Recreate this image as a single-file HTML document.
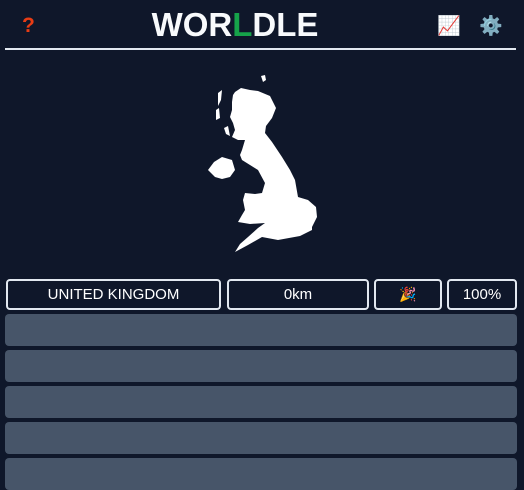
<!DOCTYPE html>
<html><head><meta charset="utf-8"><style>
*{box-sizing:border-box;margin:0;padding:0}
body{width:524px;height:490px;background:#0f172a;font-family:"Liberation Sans","DejaVu Sans",sans-serif;overflow:hidden;position:relative;color:#fff}
.hdr{position:absolute;left:5px;top:0;width:511px;height:50px;border-bottom:2px solid #e2e8f0}
.title{position:absolute;left:143px;width:174px;top:6px;text-align:center;font-weight:bold;font-size:33px;letter-spacing:0px;color:#f8fafc;white-space:nowrap}
.title span{color:#16a34a}
.q{position:absolute;left:17px;top:14px;font-size:21px;color:#e83c14;font-weight:bold}
.ic{position:absolute;top:14px;font-size:19px}
.box{position:absolute;top:279px;height:31px;border:2px solid #e2e8f0;border-radius:4px;text-align:center;line-height:27px;font-size:15px}
.row{position:absolute;left:5px;width:512px;height:32px;background:#475569;border-radius:4px}
</style></head><body>
<div class="hdr">
<div class="q">?</div>
<div class="title">WOR<span>L</span>DLE</div>
<div class="ic" style="left:432px">📈</div>
<div class="ic" style="left:474px;color:#ccc">⚙️</div>
</div>
<svg style="position:absolute;left:0;top:0" width="524" height="270">
<path fill="#fff" d="M235,92 L241,88 L250,90 L258,91 L270,96 L276,108 L272,118 L266,126 L265,133 L272,142 L282,157 L290,170 L295,180 L298,197 L308,200 L316,207 L317,217 L312,227 L312,230 L300,236 L278,240 L262,237 L248,245 L235,252 L240,244 L248,237 L258,228 L265,223 L250,224 L238,222 L242,215 L245,210 L243,200 L245,193 L255,194 L262,193 L265,183 L258,170 L250,165 L242,160 L240,155 L242,150 L245,140 L238,140 L232,137 L235,130 L233,123 L230,117 L232,110 L232,102 L233,95 Z"/>
<path fill="#fff" d="M208,170 L214,162 L222,157 L232,160 L235,170 L230,177 L222,179 L215,177 Z"/>
<path fill="#fff" d="M261,76 L265,75 L266,80 L263,82 Z M218,93 L222,90 L221,100 L218,106 Z M216,110 L219,108 L220,118 L216,120 Z M224,128 L228,126 L230,136 L226,134 Z"/>
</svg>
<div class="box" style="left:6px;width:215px">UNITED KINGDOM</div>
<div class="box" style="left:227px;width:142px">0km</div>
<div class="box" style="left:374px;width:68px;font-size:14px">🎉</div>
<div class="box" style="left:447px;width:70px">100%</div>
<div class="row" style="top:314px"></div>
<div class="row" style="top:350px"></div>
<div class="row" style="top:386px"></div>
<div class="row" style="top:422px"></div>
<div class="row" style="top:458px"></div>
</body></html>
